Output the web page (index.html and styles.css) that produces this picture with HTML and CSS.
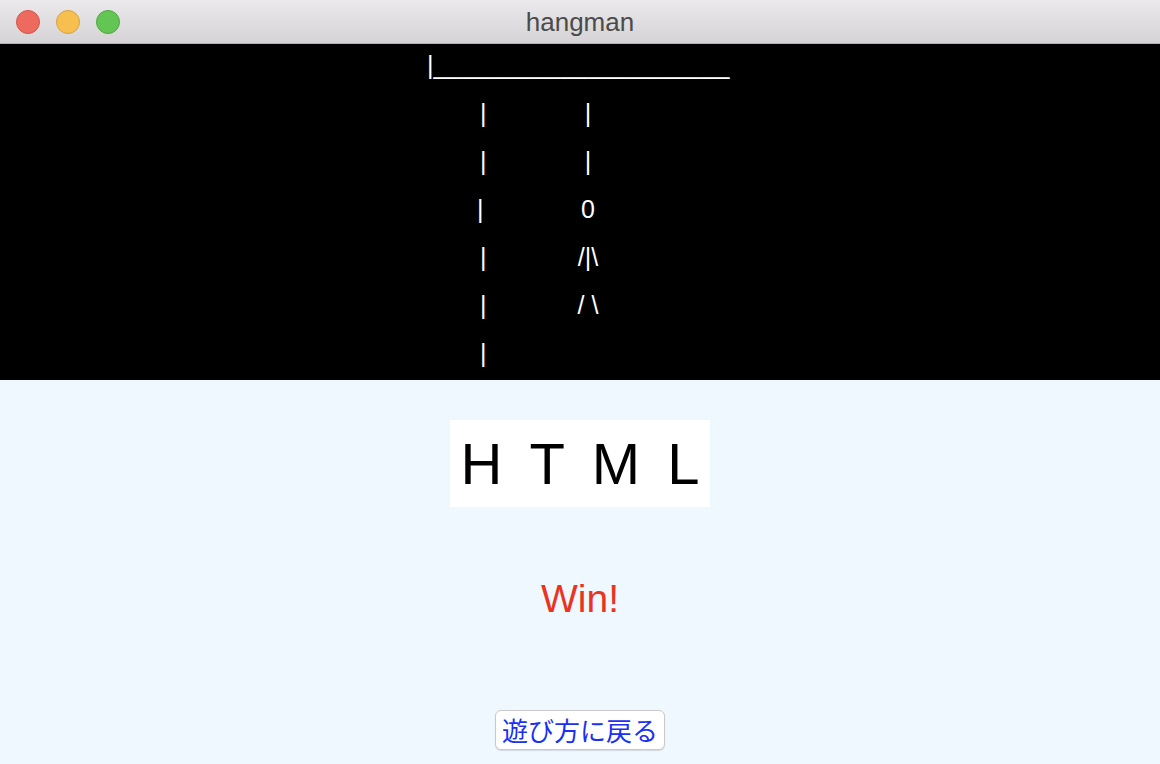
FILE: index.html
```html
<!DOCTYPE html>
<html lang="ja">
<head>
<meta charset="utf-8">
<title>hangman</title>
<link rel="stylesheet" href="styles.css">
</head>
<body>
<div class="window">
  <header class="titlebar">
    <div class="lights">
      <span class="light red"></span>
      <span class="light yellow"></span>
      <span class="light green"></span>
    </div>
    <div class="title">hangman</div>
  </header>
  <section class="gallows">
    <div class="art">
      <div class="row top">|<span class="beam">_____________________</span></div>
      <div class="row"><span class="post">|</span><span class="fig">|</span></div>
      <div class="row"><span class="post">|</span><span class="fig">|</span></div>
      <div class="row"><span class="post shift">|</span><span class="fig">0</span></div>
      <div class="row"><span class="post">|</span><span class="fig">/|\</span></div>
      <div class="row"><span class="post">|</span><span class="fig">/ \</span></div>
      <div class="row"><span class="post">|</span></div>
    </div>
  </section>
  <main class="board">
    <div class="word">
      <span>H</span><span>T</span><span>M</span><span>L</span>
    </div>
    <p class="result">Win!</p>
    <button class="back" type="button">遊び方に戻る</button>
  </main>
</div>
</body>
</html>
```

FILE: styles.css
```css
* { box-sizing: border-box; }
html, body { margin: 0; padding: 0; }
body {
  width: 1160px;
  height: 764px;
  overflow: hidden;
  background: #f0f8ff;
  font-family: "Liberation Sans", "Noto Sans CJK JP", sans-serif;
}
.window {
  display: flex;
  flex-direction: column;
  height: 764px;
}
.titlebar {
  height: 44px;
  flex: none;
  display: flex;
  align-items: center;
  justify-content: center;
  position: relative;
  background: linear-gradient(#ebe9eb, #d5d3d5);
  border-bottom: 1px solid #b3b1b3;
}
.lights {
  position: absolute;
  left: 16px;
  top: 10px;
  display: flex;
  gap: 16px;
}
.light {
  width: 24px;
  height: 24px;
  border-radius: 50%;
  display: block;
}
.red { background: #ee6a5f; border: 1px solid #d2554b; }
.yellow { background: #f6bf4f; border: 1px solid #d8a23f; }
.green { background: #62c554; border: 1px solid #51a83e; }
.title {
  font-family: "Liberation Sans", sans-serif;
  font-size: 26px;
  color: #4b4b4b;
  line-height: 44px;
}
.gallows {
  background: #000;
  height: 336px;
  flex: none;
}
.art {
  width: 306px;
  margin: 0 auto;
  color: #fff;
  font-size: 25px;
}
.row {
  height: 48px;
  line-height: 42px;
  padding-bottom: 6px;
  white-space: pre;
}
.row:not(.top) { padding-left: 53px; }
.beam { letter-spacing: 0.2px; }
.post {
  display: inline-block;
  width: 88px;
}
.post.shift { margin-left: -3px; width: 91px; }
.fig {
  display: inline-block;
  width: 40px;
  text-align: center;
}
.fig:only-child { font-size: 26px; }
.board {
  flex: 1;
  display: flex;
  flex-direction: column;
  align-items: center;
  padding-top: 40px;
}
.word {
  height: 87px;
  background: #fff;
  display: flex;
  align-items: center;
  gap: 27px;
  padding: 0 11px;
  font-size: 58px;
  color: #000;
}
.result {
  margin: 68px 0 0;
  height: 48px;
  line-height: 48px;
  font-size: 39px;
  color: #ea3323;
}
.back {
  margin-top: 87px;
  width: 170px;
  height: 40px;
  padding: 0;
  background: #fff;
  border: 1px solid #c9c9c9;
  border-radius: 6px;
  box-shadow: 0 1px 1px rgba(0,0,0,0.12);
  font-family: "Noto Sans CJK JP", sans-serif;
  font-size: 26px;
  line-height: 36px;
  color: #1a30f5;
}
```
